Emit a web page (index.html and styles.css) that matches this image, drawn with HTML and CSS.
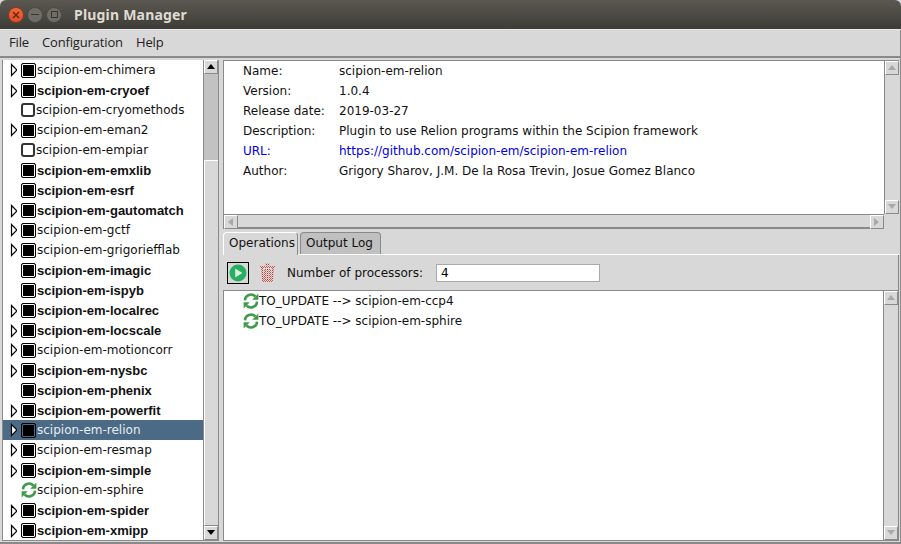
FILE: index.html
```html
<!DOCTYPE html>
<html lang="en">
<head>
	<meta charset="UTF-8">
	<title>Plugin Manager</title>
	<link rel="stylesheet" href="styles.css">
</head>
<body>
	<svg class="defs" width="0" height="0">
		<defs>
			<pattern id="stipple" width="2" height="2" patternUnits="userSpaceOnUse">
				<rect width="1" height="1" fill="#c0392b"/>
				<rect x="1" y="1" width="1" height="1" fill="#c0392b"/>
			</pattern>
		</defs>
		<symbol id="sync" viewBox="0 0 16 16">
			<path d="M2 7.4A6 6 0 0 1 12.4 3.5" fill="none" stroke="#3f9a4c" stroke-width="2.6"/>
			<path d="M15.4 0.6V6.8H9.2z" fill="#3f9a4c"/>
			<path d="M14 8.6A6 6 0 0 1 3.6 12.5" fill="none" stroke="#3f9a4c" stroke-width="2.6"/>
			<path d="M0.6 15.4V9.2H6.8z" fill="#3f9a4c"/>
		</symbol>
		<symbol id="arrow" viewBox="0 0 8 14">
			<path d="M2.5 1.5L8 7L2.5 12.5z" fill="#fff" stroke="#000" stroke-width="1.2"/>
		</symbol>
	</svg>

	<div class="titlebar">
		<div class="winbtns">
			<span class="winbtn close">
				<svg width="8" height="8" viewBox="0 0 8 8"><path d="M1 1L7 7M7 1L1 7" stroke="#6b2410" stroke-width="1.5"/></svg>
			</span>
			<span class="winbtn"><i class="minbar"></i></span>
			<span class="winbtn"><i class="maxbox"></i></span>
		</div>
		<span class="wintitle">Plugin Manager</span>
	</div>

	<div class="menubar">
		<span>File</span>
		<span>Configuration</span>
		<span>Help</span>
	</div>

	<div class="main">
		<div class="left">
			<ul class="tree">
				<li><svg class="arr"><use href="#arrow"/></svg><i class="chk"></i>scipion-em-chimera</li>
				<li class="inst"><svg class="arr"><use href="#arrow"/></svg><i class="chk"></i>scipion-em-cryoef</li>
				<li class="none"><span class="arr"></span><i class="chk off"></i>scipion-em-cryomethods</li>
				<li><svg class="arr"><use href="#arrow"/></svg><i class="chk"></i>scipion-em-eman2</li>
				<li class="none"><span class="arr"></span><i class="chk off"></i>scipion-em-empiar</li>
				<li class="inst"><span class="arr"></span><i class="chk"></i>scipion-em-emxlib</li>
				<li class="inst"><span class="arr"></span><i class="chk"></i>scipion-em-esrf</li>
				<li class="inst"><svg class="arr"><use href="#arrow"/></svg><i class="chk"></i>scipion-em-gautomatch</li>
				<li><svg class="arr"><use href="#arrow"/></svg><i class="chk"></i>scipion-em-gctf</li>
				<li><svg class="arr"><use href="#arrow"/></svg><i class="chk"></i>scipion-em-grigoriefflab</li>
				<li class="inst"><span class="arr"></span><i class="chk"></i>scipion-em-imagic</li>
				<li class="inst"><span class="arr"></span><i class="chk"></i>scipion-em-ispyb</li>
				<li class="inst"><svg class="arr"><use href="#arrow"/></svg><i class="chk"></i>scipion-em-localrec</li>
				<li class="inst"><svg class="arr"><use href="#arrow"/></svg><i class="chk"></i>scipion-em-locscale</li>
				<li><svg class="arr"><use href="#arrow"/></svg><i class="chk"></i>scipion-em-motioncorr</li>
				<li class="inst"><svg class="arr"><use href="#arrow"/></svg><i class="chk"></i>scipion-em-nysbc</li>
				<li class="inst"><span class="arr"></span><i class="chk"></i>scipion-em-phenix</li>
				<li class="inst"><svg class="arr"><use href="#arrow"/></svg><i class="chk"></i>scipion-em-powerfit</li>
				<li class="sel"><svg class="arr"><use href="#arrow"/></svg><i class="chk"></i>scipion-em-relion</li>
				<li><svg class="arr"><use href="#arrow"/></svg><i class="chk"></i>scipion-em-resmap</li>
				<li class="inst"><svg class="arr"><use href="#arrow"/></svg><i class="chk"></i>scipion-em-simple</li>
				<li><span class="arr"></span><svg class="sync"><use href="#sync"/></svg>scipion-em-sphire</li>
				<li class="inst"><svg class="arr"><use href="#arrow"/></svg><i class="chk"></i>scipion-em-spider</li>
				<li class="inst"><svg class="arr"><use href="#arrow"/></svg><i class="chk"></i>scipion-em-xmipp</li>
			</ul>
			<div class="vbar tree-bar">
				<div class="sbtn up dark"></div>
				<div class="track"><div class="gap"></div><div class="thumb"></div></div>
				<div class="sbtn down dark"></div>
			</div>
		</div>

		<div class="right">
			<div class="info">
				<div class="info-body">
					<table class="fields">
						<tr><td>Name:</td><td>scipion-em-relion</td></tr>
						<tr><td>Version:</td><td>1.0.4</td></tr>
						<tr><td>Release date:</td><td>2019-03-27</td></tr>
						<tr><td>Description:</td><td>Plugin to use Relion programs within the Scipion framework</td></tr>
						<tr class="link"><td>URL:</td><td>https://github.com/scipion-em/scipion-em-relion</td></tr>
						<tr><td>Author:</td><td>Grigory Sharov, J.M. De la Rosa Trevin, Josue Gomez Blanco</td></tr>
					</table>
				</div>
				<div class="vbar">
					<div class="sbtn up"></div>
					<div class="track plain"></div>
					<div class="sbtn down"></div>
				</div>
				<div class="hbar">
					<div class="sbtn left-b"></div>
					<div class="track plain"></div>
					<div class="sbtn right-b"></div>
				</div>
			</div>

			<div class="tabs">
				<span class="tab active">Operations</span>
				<span class="tab second">Output Log</span>
			</div>

			<div class="toolbar">
				<span class="runbtn">
					<svg width="18" height="18" viewBox="0 0 18 18">
						<circle cx="9" cy="9" r="8.5" fill="#27ae60"/>
						<path d="M6.2 4.4L13.4 9L6.2 13.6z" fill="#d9efe1"/>
					</svg>
				</span>
				<svg class="trash" width="17" height="19" viewBox="0 0 17 19">
					<path d="M6 1.5h5M1 4h15M3 4l1 14h9l1-14M6 6v11M8.500 6v11M11 6v11" fill="none" stroke="url(#stipple)" stroke-width="1.6"/>
				</svg>
				<span class="proc-label">Number of processors:</span>
				<input class="proc" type="text" value="4">
			</div>

			<div class="ops">
				<ul class="oplist">
					<li><svg class="sync"><use href="#sync"/></svg>TO_UPDATE --&gt; scipion-em-ccp4</li>
					<li><svg class="sync"><use href="#sync"/></svg>TO_UPDATE --&gt; scipion-em-sphire</li>
				</ul>
				<div class="vbar">
					<div class="sbtn up"></div>
					<div class="track plain"></div>
					<div class="sbtn down"></div>
				</div>
			</div>
		</div>
	</div>
</body>
</html>
```

FILE: styles.css
```css
* {
	margin: 0;
	padding: 0;
	box-sizing: border-box;
	list-style: none;
}
html, body {
	height: 100%;
	overflow: hidden;
}
body {
	display: flex;
	flex-direction: column;
	background-color: #d8d8d8;
	border-bottom: 2px solid #8a8a8a;
	font-family: "DejaVu Sans", sans-serif;
	font-size: 12px;
	color: #111;
}
.defs {
	position: absolute;
}

/* window frame */
.titlebar {
	display: flex;
	align-items: center;
	flex: none;
	height: 30px;
	padding-left: 8px;
	background: linear-gradient(#5a5850, #3d3c37);
	border-radius: 6px 6px 0 0;
	border-bottom: 1px solid #e8e8e8;
}
.winbtns {
	display: flex;
	gap: 3px;
}
.winbtn {
	display: flex;
	align-items: center;
	justify-content: center;
	width: 16px;
	height: 16px;
	border-radius: 50%;
	background: #6e6d66;
	border: 1px solid #4a4943;
}
.winbtn.close {
	background: linear-gradient(#f0683a, #e04f22);
	border-color: #8c3a1e;
}
.minbar {
	width: 8px;
	height: 1px;
	background: #35342f;
}
.maxbox {
	width: 7px;
	height: 7px;
	border: 1px solid #35342f;
}
.wintitle {
	margin-left: 12px;
	font-family: "Noto Sans", sans-serif;
	font-size: 14px;
	font-weight: 700;
	color: #dfdbd2;
	letter-spacing: 0.2px;
}
.menubar {
	display: flex;
	flex: none;
	gap: 13px;
	align-items: center;
	height: 28px;
	padding: 0 0 2px 9px;
	border-right: 1px solid #8a8a8a;
	border-bottom: 2px solid #8a8a8a;
	font-family: "Open Sans", sans-serif;
	font-size: 13px;
	letter-spacing: -0.15px;
	color: #222;
}

.main {
	display: flex;
	flex: 1;
	min-height: 0;
	padding: 2px 1px 1px 2px;
	border-right: 1px solid #8a8a8a;
}

/* plugin tree */
.left {
	display: flex;
	width: 217px;
	border: 1px solid #8a8a8a;
	border-width: 0 1px 1px 0;
}
.tree {
	flex: 1;
	background: #fff;
	border-left: 1px solid #8a8a8a;
}
.tree li {
	display: flex;
	align-items: center;
	height: 20px;
	white-space: nowrap;
}
.tree li.inst {
	font-family: "Liberation Sans", sans-serif;
	font-size: 13px;
	font-weight: 700;
	padding-top: 1px;
	color: #111;
}
.tree li.sel {
	background: #4a6a85;
	color: #e8edf1;
}
.arr {
	display: block;
	flex: none;
	width: 8px;
	height: 14px;
	margin-left: 6px;
	margin-right: 4px;
}
.chk {
	display: block;
	flex: none;
	width: 15px;
	height: 15px;
	border: 1px solid #000;
	border-radius: 2px;
	background: #000;
	box-shadow: inset 0 0 0 1px #fff;
	margin-right: 1px;
}
.tree li.sel .chk {
	box-shadow: inset 0 0 0 1px #4a6a85;
}
.chk.off {
	width: 14px;
	height: 14px;
	border: 2px solid #333;
	background: #fff;
	box-shadow: none;
	border-radius: 3px;
	margin-right: 1px;
}
.sync {
	display: block;
	flex: none;
	width: 16px;
	height: 16px;
}

/* scrollbars */
.vbar {
	display: flex;
	flex-direction: column;
	flex: none;
	width: 15px;
	background: #d8d8d8;
	border-left: 1px solid #8a8a8a;
}
.hbar {
	display: flex;
	flex: none;
	height: 15px;
	background: #d8d8d8;
	border-top: 1px solid #8a8a8a;
	border-bottom: 2px solid #8a8a8a;
}
.sbtn {
	position: relative;
	flex: none;
	width: 14px;
	height: 14px;
	background: #d8d8d8;
	border: 1px solid #8a8a8a;
	border-color: #fff #8a8a8a #8a8a8a #fff;
}
.sbtn::after {
	content: "";
	position: absolute;
	left: 2px;
	top: 3px;
	border: 4px solid transparent;
	border-top-width: 0;
	border-bottom: 5px solid #a8a8a8;
}
.sbtn.down::after {
	border-bottom-width: 0;
	border-top: 5px solid #a8a8a8;
}
.sbtn.left-b::after {
	left: 3px;
	top: 2px;
	border: 4px solid transparent;
	border-left-width: 0;
	border-right: 5px solid #a8a8a8;
}
.sbtn.right-b::after {
	left: 3px;
	top: 2px;
	border: 4px solid transparent;
	border-right-width: 0;
	border-left: 5px solid #a8a8a8;
}
.sbtn.dark.up::after {
	border-bottom-color: #000;
}
.sbtn.dark.down::after {
	border-top-color: #000;
}
.track {
	display: flex;
	flex-direction: column;
	flex: 1;
}
.track.plain {
	background: #d8d8d8;
}
.tree-bar .gap {
	height: 86px;
	background: #c2c2c2;
}
.tree-bar .thumb {
	flex: 1;
	background: #d8d8d8;
	border-top: 1px solid #fff;
	border-left: 1px solid #fff;
	border-bottom: 1px solid #8a8a8a;
}

/* right side */
.right {
	display: flex;
	flex-direction: column;
	flex: 1;
	min-width: 0;
	margin-left: 4px;
}
.info {
	display: grid;
	grid-template-columns: 1fr 15px;
	grid-template-rows: 1fr 15px;
	height: 169px;
	border-top: 1px solid #8a8a8a;
	border-left: 1px solid #8a8a8a;
}
.info-body {
	background: #fff;
	padding: 0 0 0 19px;
}
.fields {
	border-collapse: collapse;
}
.fields td {
	height: 20px;
	padding: 0;
	white-space: nowrap;
}
.fields td:first-child {
	width: 96px;
}
.link td {
	color: #0000e0;
}
.tabs {
	display: flex;
	flex: none;
	gap: 2px;
	height: 23px;
	margin-top: 3px;
	border-bottom: 1px solid #fff;
}
.tab {
	padding: 3px 4px 0 5px;
	background: #c0c0c0;
	border: 1px solid #8a8a8a;
	border-bottom: 0;
	border-radius: 4px 4px 0 0;
}
.tab.second {
	padding-right: 7px;
}
.tab.active {
	padding-right: 2px;
	background: #d8d8d8;
	border-color: #fff #8a8a8a #d8d8d8 #fff;
	height: 23px;
}
.toolbar {
	display: flex;
	flex: none;
	align-items: center;
	height: 35px;
	padding-left: 4px;
	border-right: 1px solid #8a8a8a;
}
.runbtn {
	display: flex;
	align-items: center;
	justify-content: center;
	width: 22px;
	height: 22px;
	border: 1px solid #000;
}
.trash {
	margin-left: 10px;
}
.proc-label {
	margin-left: 11px;
}
.proc {
	width: 164px;
	height: 18px;
	margin-left: 13px;
	padding-left: 4px;
	border: 1px solid #aaa;
	background: #fff;
	font: inherit;
}
.ops {
	display: flex;
	flex: 1;
	min-height: 0;
	border: 1px solid #8a8a8a;
}
.oplist {
	flex: 1;
	background: #fff;
	padding-left: 19px;
}
.oplist li {
	display: flex;
	align-items: center;
	height: 20px;
}
```
